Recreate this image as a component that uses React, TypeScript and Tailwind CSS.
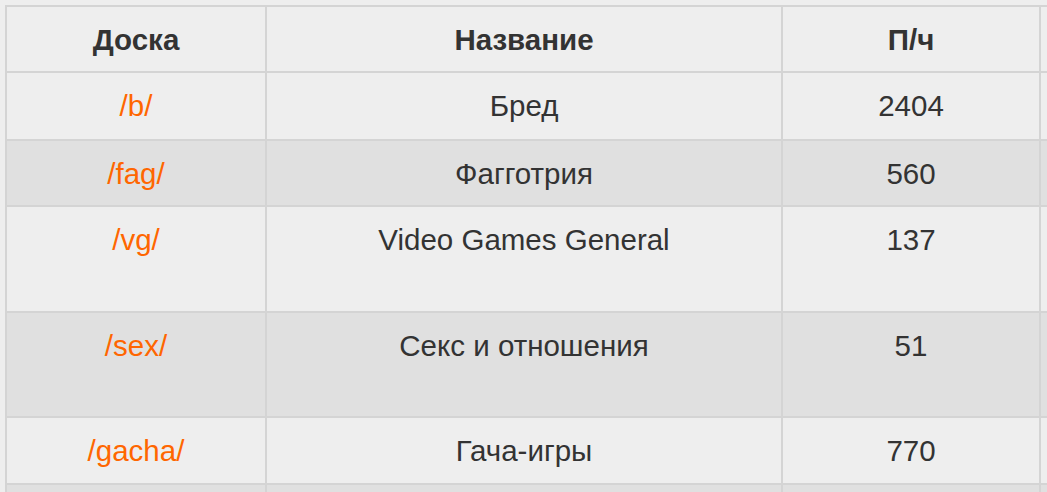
const boards = [
  { slug: "/b/", name: "Бред", pph: "2404", h: "h-[68px]" },
  { slug: "/fag/", name: "Фагготрия", pph: "560", h: "h-[66px]" },
  { slug: "/vg/", name: "Video Games General", pph: "137", h: "h-[106px]" },
  { slug: "/sex/", name: "Секс и отношения", pph: "51", h: "h-[105px]" },
  { slug: "/gacha/", name: "Гача-игры", pph: "770", h: "h-[67px]" },
];

const cell = "border-r-2 border-b-2 border-[#d4d4d4] pt-[13px] text-center leading-[39px]";

export default function App() {
  return (
    <div
      className="h-screen w-full overflow-hidden bg-[#eeeeee] pl-[5px] pt-[5px] text-[29.5px] text-[#333333]"
      style={{ fontFamily: '"Liberation Sans", Arial, sans-serif' }}
    >
      <div className="grid w-[1340px] grid-cols-[260px_516px_258px_300px] border-l-2 border-t-2 border-[#d4d4d4]">
        <div className={`${cell} h-[66px] font-bold`}>Доска</div>
        <div className={`${cell} h-[66px] font-bold`}>Название</div>
        <div className={`${cell} h-[66px] font-bold`}>П/ч</div>
        <div className={`${cell} h-[66px]`}></div>

        {boards.map((b, i) => {
          const bg = i % 2 === 1 ? "bg-[#e0e0e0]" : "bg-[#eeeeee]";
          return (
            <div key={b.slug} className="contents">
              <div className={`${cell} ${b.h} ${bg}`}>
                <a href="#" className="text-[#ff6600]">
                  {b.slug}
                </a>
              </div>
              <div className={`${cell} ${b.h} ${bg}`}>{b.name}</div>
              <div className={`${cell} ${b.h} ${bg}`}>{b.pph}</div>
              <div className={`${cell} ${b.h} ${bg}`}></div>
            </div>
          );
        })}

        <div className={`${cell} h-[66px] bg-[#e0e0e0]`}></div>
        <div className={`${cell} h-[66px] bg-[#e0e0e0]`}></div>
        <div className={`${cell} h-[66px] bg-[#e0e0e0]`}></div>
        <div className={`${cell} h-[66px] bg-[#e0e0e0]`}></div>
      </div>
    </div>
  );
}
